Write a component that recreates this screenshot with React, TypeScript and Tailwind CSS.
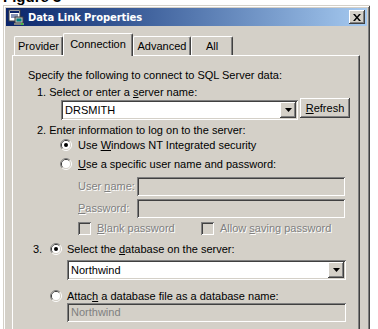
import React from 'react';

const sunken =
  'shadow-[inset_1px_1px_0_#808080,inset_-1px_-1px_0_#ffffff,inset_2px_2px_0_#404040,inset_-2px_-2px_0_#d4d0c8]';
const raised =
  'shadow-[inset_-1px_-1px_0_#404040,inset_1px_1px_0_#ffffff,inset_-2px_-2px_0_#808080,inset_2px_2px_0_#d4d0c8]';
const disabledText = 'text-[#808080] [text-shadow:1px_1px_0_#ffffff]';

const Radio = ({ checked = false }: { checked?: boolean }) => (
  <svg width="12" height="12" viewBox="0 0 12 12" className="shrink-0">
    <path d="M2.11 9.89 A5.5 5.5 0 0 1 9.89 2.11" fill="none" stroke="#808080" />
    <path d="M9.89 2.11 A5.5 5.5 0 0 1 2.11 9.89" fill="none" stroke="#ffffff" />
    <path d="M2.82 9.18 A4.5 4.5 0 0 1 9.18 2.82" fill="none" stroke="#404040" />
    <path d="M9.18 2.82 A4.5 4.5 0 0 1 2.82 9.18" fill="none" stroke="#d4d0c8" />
    <circle cx="6" cy="6" r="4" fill="#ffffff" />
    {checked && <circle cx="6" cy="6" r="2" fill="#000000" />}
  </svg>
);

const Checkbox = () => <div className={`w-[13px] h-[13px] shrink-0 bg-[#d4d0c8] ${sunken}`} />;

const DropButton = () => (
  <div className={`w-[16px] h-[16px] bg-[#d4d0c8] flex items-center justify-center ${raised}`}>
    <svg width="7" height="4" viewBox="0 0 7 4">
      <polygon points="0,0 7,0 3.5,4" fill="#000000" />
    </svg>
  </div>
);

const Combo = ({ value, width }: { value: string; width: string }) => (
  <div className={`${width} h-[20px] bg-white flex items-center pl-[4px] pr-[2px] ${sunken}`}>
    <span className="flex-1 text-black">{value}</span>
    <DropButton />
  </div>
);

const TitleIcon = () => (
  <svg width="16" height="16" viewBox="0 0 16 16">
    <rect x="1" y="1" width="11" height="11" fill="#ffffff" stroke="#404040" />
    <rect x="2" y="2" width="9" height="2" fill="#0a246a" />
    <line x1="3" y1="6" x2="10" y2="6" stroke="#0a246a" />
    <line x1="3" y1="8" x2="10" y2="8" stroke="#0a246a" />
    <rect x="7" y="8" width="8" height="6" fill="#c0c0c0" stroke="#404040" />
    <rect x="8.5" y="9.5" width="5" height="3" fill="#008080" />
    <rect x="6" y="14" width="10" height="2" fill="#808080" />
    <rect x="13" y="14.5" width="2" height="1" fill="#00ff00" />
  </svg>
);

const Tab = ({ label, width, active = false }: { label: string; width: string; active?: boolean }) =>
  active ? (
    <div
      className={`${width} relative z-10 -mb-px h-[23px] bg-[#d4d0c8] rounded-t-[2px] border-t border-l border-white border-r border-r-[#404040] shadow-[inset_-1px_0_0_#808080] flex items-center justify-center pb-[2px]`}
    >
      {label}
    </div>
  ) : (
    <div
      className={`${width} h-[19px] bg-[#d4d0c8] rounded-t-[2px] border-t border-l border-white border-r border-r-[#404040] shadow-[inset_-1px_0_0_#808080] flex items-center justify-center`}
    >
      {label}
    </div>
  );

export default function App() {
  return (
    <div className="w-[378px] h-[329px] bg-white overflow-hidden font-['Liberation_Sans',Arial,sans-serif] text-[11px] text-black leading-[13px]">
      {/* cropped caption above the dialog */}
      <div className="h-[5px] overflow-hidden pl-[3px]">
        <div className="-mt-[11px] text-[15px] leading-[15px] font-bold">Figure 3</div>
      </div>

      <div
        className={`ml-[3px] w-[367px] h-[340px] bg-[#d4d0c8] p-[3px] shadow-[inset_1px_1px_0_#d4d0c8,inset_-1px_-1px_0_#404040,inset_2px_2px_0_#ffffff,inset_-2px_-2px_0_#808080]`}
      >
        {/* title bar */}
        <div className="h-[18px] bg-gradient-to-r from-[#0a246a] to-[#a6caf0] flex items-center pl-[2px] pr-[2px]">
          <TitleIcon />
          <span className="ml-[4px] flex-1 text-white font-bold font-['DejaVu_Sans',sans-serif] text-[10px] tracking-[-0.1px]">
            Data Link Properties
          </span>
          <div className={`w-[16px] h-[14px] bg-[#d4d0c8] flex items-center justify-center ${raised}`}>
            <svg width="8" height="7" viewBox="0 0 8 7">
              <path d="M0 0 L2 0 L4 2.5 L6 0 L8 0 L5 3.5 L8 7 L6 7 L4 4.5 L2 7 L0 7 L3 3.5 Z" fill="#000000" />
            </svg>
          </div>
        </div>

        {/* tab strip and page */}
        <div className="ml-[6px] w-[348px]">
          <div className="mt-[7px] h-[22px] pl-[2px] flex items-end">
            <Tab label="Provider" width="w-[49px]" />
            <Tab label="Connection" width="w-[70px]" active />
            <Tab label="Advanced" width="w-[58px]" />
            <Tab label="All" width="w-[42px]" />
          </div>

          <div className="h-[290px] border-t border-l border-white border-r border-r-[#404040] shadow-[inset_-1px_0_0_#808080] flex flex-col">
            <div className="mt-[13px] ml-[15px] h-[13px]">Specify the following to connect to SQL Server data:</div>
            <div className="mt-[4px] ml-[24px] h-[12px]">
              1. Select or enter a <u>s</u>erver name:
            </div>
            <div className="ml-[48px] h-[22px] flex items-start">
              <div className="mt-[2px]">
                <Combo value="DRSMITH" width="w-[237px]" />
              </div>
              <div className={`ml-[2px] w-[50px] h-[20px] flex items-center justify-center ${raised}`}>
                <span>
                  <u>R</u>efresh
                </span>
              </div>
            </div>
            <div className="mt-[4px] ml-[24px] h-[13px]">2. Enter information to log on to the server:</div>
            <div className="ml-[47px] h-[16px] flex items-center gap-[6px]">
              <Radio checked />
              <span>
                Use <u>W</u>indows NT Integrated security
              </span>
            </div>
            <div className="mt-[3px] ml-[47px] h-[16px] flex items-center gap-[6px]">
              <Radio />
              <span>
                <u>U</u>se a specific user name and password:
              </span>
            </div>
            <div className="mt-[5px] ml-[65px] h-[19px] flex items-center">
              <span className={`w-[59px] shrink-0 ${disabledText}`}>
                User <u>n</u>ame:
              </span>
              <div className={`w-[208px] h-[19px] bg-[#d4d0c8] ${sunken}`} />
            </div>
            <div className="mt-[3px] ml-[65px] h-[19px] flex items-center">
              <span className={`w-[59px] shrink-0 ${disabledText}`}>
                <u>P</u>assword:
              </span>
              <div className={`w-[208px] h-[19px] bg-[#d4d0c8] ${sunken}`} />
            </div>
            <div className="mt-[4px] ml-[65px] h-[13px] flex items-center">
              <div className="w-[123px] flex items-center gap-[6px]">
                <Checkbox />
                <span className={disabledText}>
                  <u>B</u>lank password
                </span>
              </div>
              <div className="flex items-center gap-[6px]">
                <Checkbox />
                <span className={disabledText}>
                  Allow <u>s</u>aving password
                </span>
              </div>
            </div>
            <div className="mt-[6px] ml-[20px] h-[16px] flex items-center">
              <span className="w-[17px] shrink-0">3.</span>
              <Radio checked />
              <span className="ml-[5px]">
                Select the <u>d</u>atabase on the server:
              </span>
            </div>
            <div className="mt-[3px] ml-[54px]">
              <Combo value="Northwind" width="w-[279px]" />
            </div>
            <div className="mt-[9px] ml-[37px] h-[14px] flex items-center">
              <Radio />
              <span className="ml-[5px]">
                Attac<u>h</u> a database file as a database name:
              </span>
            </div>
            <div className="ml-[54px]">
              <div className={`w-[279px] h-[19px] bg-[#d4d0c8] flex items-center pl-[4px] text-[#808080] ${sunken}`}>
                Northwind
              </div>
            </div>
          </div>
        </div>
      </div>
    </div>
  );
}
